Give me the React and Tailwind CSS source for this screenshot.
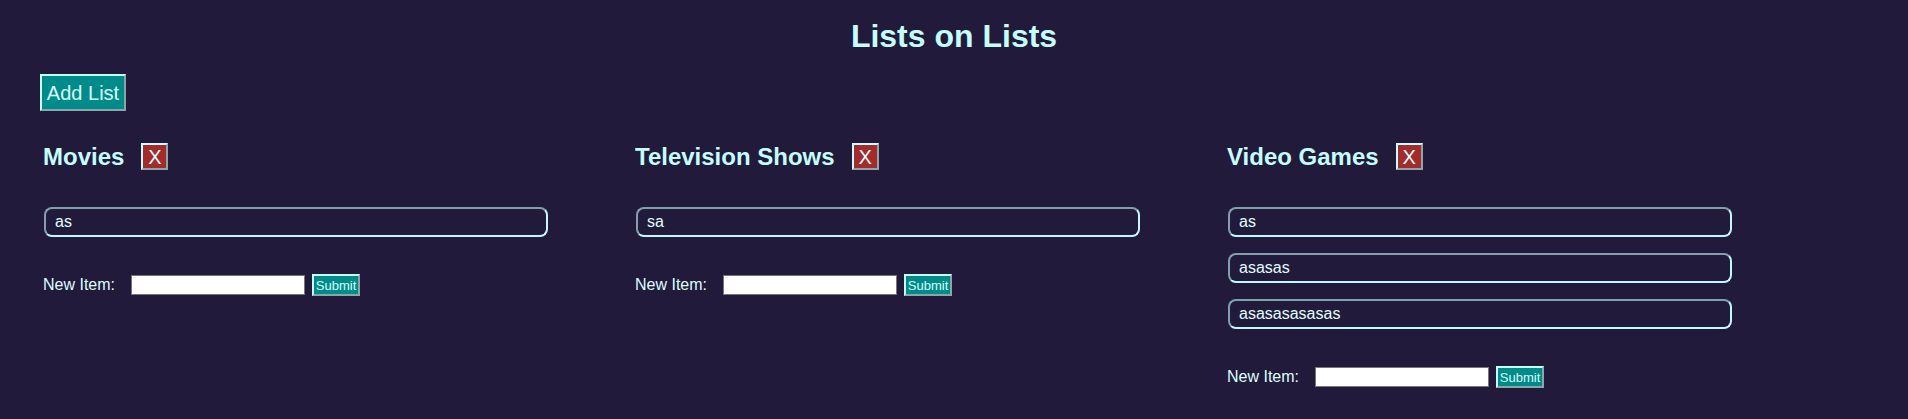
import React from 'react';

const lists = [
    { name: 'Movies', items: ['as'] },
    { name: 'Television Shows', items: ['sa'] },
    { name: 'Video Games', items: ['as', 'asasas', 'asasasasasas'] },
];

const ListColumn = ({ list }) => {
    return (
        <div className="w-[592px] shrink-0">
            {/* Header with delete button */}
            <div className="flex items-start gap-[17px]">
                <h2 className="text-[24px] font-bold leading-[28px]">{list.name}</h2>
                <button className="flex h-[27px] w-[27px] items-center justify-center border-2 border-t-[#c8ffff] border-l-[#c8ffff] border-b-[#8aa6a8] border-r-[#8aa6a8] bg-[#a52a2a] text-[20px] leading-none text-[#dcffff]">
                    X
                </button>
            </div>

            {/* Items */}
            <div className="mt-[36px] ml-[1px] flex flex-col gap-4">
                {list.items.map((item, i) => (
                    <div
                        key={i}
                        className="flex h-[30px] w-[504px] items-center rounded-[8px] border-2 border-t-[#7fa2a8] border-l-[#7fa2a8] border-b-[#c0faff] border-r-[#c0faff] pl-[9px] text-[16px] text-[#e0ffff]"
                    >
                        {item}
                    </div>
                ))}
            </div>

            {/* New item form */}
            <div className="mt-[37px] flex h-[22px] items-center">
                <span className="mr-4 text-[16px] leading-[20px] text-[#dcffff]">New Item:</span>
                <input type="text" className="h-[20px] w-[174px] border border-[#767676] bg-white" />
                <button className="ml-[7px] h-[22px] w-[48px] border-2 border-t-[#c8ffff] border-l-[#c8ffff] border-b-[#8aa6a8] border-r-[#8aa6a8] bg-[#008b8b] px-0 text-[13px] leading-none text-[#dcffff]">
                    Submit
                </button>
            </div>
        </div>
    );
};

export default function App() {
    return (
        <div className="min-h-screen bg-[#221a3b] font-['Liberation_Sans',Arial,sans-serif] text-[#c4feff]">
            <h1 className="pt-[18px] text-center text-[32px] font-bold leading-[37px]">Lists on Lists</h1>

            <div className="mt-[19px] pl-[40px]">
                <button className="h-[37px] w-[86px] border-2 border-t-[#c8ffff] border-l-[#c8ffff] border-b-[#8aa6a8] border-r-[#8aa6a8] bg-[#008b8b] text-[20px] leading-none text-[#dcffff]">
                    Add List
                </button>
            </div>

            <div className="mt-[32px] flex pl-[43px]">
                {lists.map((list) => (
                    <ListColumn key={list.name} list={list} />
                ))}
            </div>
        </div>
    );
}
